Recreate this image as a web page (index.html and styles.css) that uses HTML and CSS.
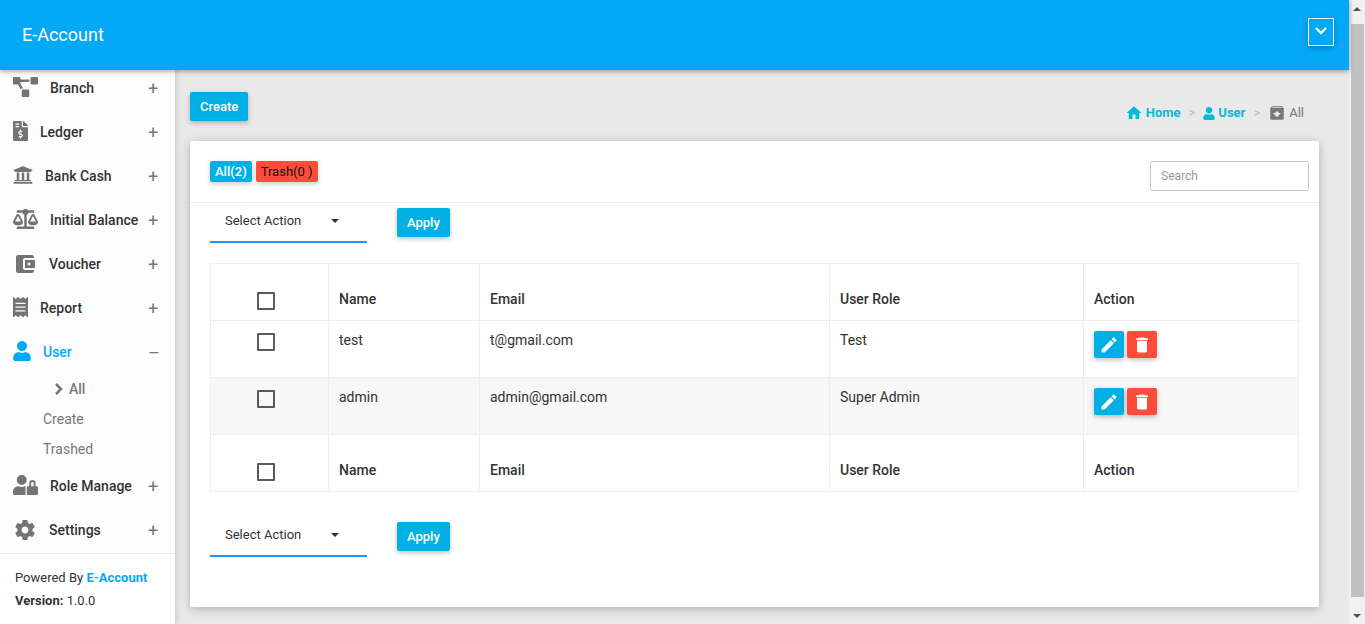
FILE: index.html
```
<!DOCTYPE html>
<html lang="en">
<head>
  <meta charset="UTF-8" />
  <meta name="viewport" content="width=device-width, initial-scale=1.0"/>
  <title>All User | E-Account</title>

  <link rel="stylesheet" href="styles.css">
</head>
<body>
  <div class="page">
    <header class="navbar">
      <a class="brand" href="#">E-Account</a>
      <button type="button" class="nav-toggle" aria-label="Open menu">
        <svg width="14" height="14" viewBox="0 0 14 14"><path d="M2 4l5 5 5-5" fill="none" stroke="currentColor" stroke-width="2.4"/></svg>
      </button>
    </header>

    <div class="wrapper">
      <!-- Left Sidebar -->
      <aside class="sidebar">
        <nav class="menu">
          <a class="menu-item" href="#">
            <svg width="25" height="20" viewBox="0 0 640 512"><path d="M384 320H256c-17.67 0-32 14.33-32 32v128c0 17.67 14.33 32 32 32h128c17.67 0 32-14.33 32-32V352c0-17.67-14.33-32-32-32zM192 32c0-17.67-14.33-32-32-32H32C14.33 0 0 14.33 0 32v128c0 17.67 14.33 32 32 32h95.72l73.16 128.04C211.98 300.98 232.4 288 256 288h.28L192 175.51V128h224V64H192V32zM608 0H480c-17.67 0-32 14.33-32 32v128c0 17.67 14.33 32 32 32h128c17.67 0 32-14.33 32-32V32c0-17.67-14.33-32-32-32z"/></svg>
            <span>Branch</span>
          </a>
          <a class="menu-item" href="#">
            <svg width="15" height="20" viewBox="0 0 384 512"><path d="M377 105L279.1 7c-4.5-4.5-10.6-7-17-7H256v128h128v-6.1c0-6.3-2.5-12.4-7-16.9zm-153 31V0H24C10.7 0 0 10.7 0 24v464c0 13.3 10.7 24 24 24h336c13.3 0 24-10.7 24-24V160H248c-13.2 0-24-10.8-24-24zM64 72c0-4.42 3.58-8 8-8h80c4.42 0 8 3.58 8 8v16c0 4.42-3.58 8-8 8H72c-4.42 0-8-3.58-8-8V72zm0 80v-16c0-4.42 3.58-8 8-8h80c4.42 0 8 3.58 8 8v16c0 4.42-3.58 8-8 8H72c-4.42 0-8-3.58-8-8zm144 263.88V440c0 4.42-3.58 8-8 8h-16c-4.42 0-8-3.58-8-8v-24.29c-11.29-.58-22.27-4.52-31.37-11.35-3.9-2.93-4.1-8.77-.57-12.14l11.75-11.21c2.77-2.64 6.89-2.76 10.13-.73 3.87 2.42 8.26 3.72 12.82 3.72h28.11c6.5 0 11.8-5.92 11.8-13.19 0-5.95-3.61-11.19-8.77-12.73l-45-13.5c-18.59-5.58-31.58-23.42-31.58-43.39 0-24.52 19.05-44.44 42.67-45.07V232c0-4.42 3.58-8 8-8h16c4.42 0 8 3.58 8 8v24.29c11.29.58 22.27 4.51 31.37 11.35 3.9 2.93 4.1 8.77.57 12.14l-11.75 11.21c-2.77 2.64-6.89 2.76-10.13.73-3.87-2.43-8.26-3.72-12.82-3.72h-28.11c-6.5 0-11.8 5.92-11.8 13.19 0 5.95 3.61 11.19 8.77 12.73l45 13.5c18.59 5.58 31.58 23.42 31.58 43.39 0 24.53-19.05 44.44-42.67 45.07z"/></svg>
            <span>Ledger</span>
          </a>
          <a class="menu-item" href="#">
            <svg width="20" height="20" viewBox="0 0 512 512"><path d="M496 128v16a8 8 0 0 1-8 8h-24v12c0 6.627-5.373 12-12 12H60c-6.627 0-12-5.373-12-12v-12H24a8 8 0 0 1-8-8v-16a8 8 0 0 1 4.941-7.392l232-88a7.996 7.996 0 0 1 6.118 0l232 88A8 8 0 0 1 496 128zm-24 304H40c-13.255 0-24 10.745-24 24v16a8 8 0 0 0 8 8h464a8 8 0 0 0 8-8v-16c0-13.255-10.745-24-24-24zM96 192v192H60c-6.627 0-12 5.373-12 12v20h416v-20c0-6.627-5.373-12-12-12h-36V192h-64v192h-64V192h-64v192h-64V192H96z"/></svg>
            <span>Bank Cash</span>
          </a>
          <a class="menu-item" href="#">
            <svg width="25" height="20" viewBox="0 0 640 512"><path d="M256 336h-.02c0-16.18 1.34-8.73-85.05-181.51-17.65-35.29-68.19-35.36-85.87 0C-2.06 328.75.02 320.33.02 336H0c0 44.18 57.31 80 128 80s128-35.82 128-80zM128 176l72 144H56l72-144zm511.98 160c0-16.18 1.34-8.73-85.05-181.51-17.65-35.29-68.19-35.36-85.87 0-87.12 174.26-85.04 165.84-85.04 181.51H384c0 44.18 57.31 80 128 80s128-35.82 128-80h-.02zM440 320l72-144 72 144H440zm88 128H352V153.25c23.51-10.29 41.16-31.48 46.39-57.25H528c8.84 0 16-7.16 16-16V48c0-8.84-7.16-16-16-16H383.64C369.04 12.68 346.09 0 320 0s-49.04 12.68-63.64 32H112c-8.84 0-16 7.16-16 16v32c0 8.84 7.16 16 16 16h129.61c5.23 25.76 22.87 46.96 46.39 57.25V448H112c-8.84 0-16 7.16-16 16v32c0 8.84 7.16 16 16 16h416c8.84 0 16-7.16 16-16v-32c0-8.84-7.16-16-16-16z"/></svg>
            <span>Initial Balance</span>
          </a>
          <a class="menu-item material" href="#">
            <svg width="24" height="24" viewBox="0 0 24 24"><path d="M21 18v1c0 1.1-.9 2-2 2H5c-1.11 0-2-.9-2-2V5c0-1.1.89-2 2-2h14c1.1 0 2 .9 2 2v1h-9c-1.11 0-2 .9-2 2v8c0 1.1.89 2 2 2h9zm-9-2h10V8H12v8zm4-2.5c-.83 0-1.5-.67-1.5-1.5s.67-1.5 1.5-1.5 1.5.67 1.5 1.5-.67 1.5-1.5 1.5z"/></svg>
            <span>Voucher</span>
          </a>
          <a class="menu-item" href="#">
            <svg width="15" height="20" viewBox="0 0 384 512"><path d="M358.4 3.2L320 48 265.6 3.2a15.9 15.9 0 0 0-19.2 0L192 48 137.6 3.2a15.9 15.9 0 0 0-19.2 0L64 48 25.6 3.2C15-4.7 0 2.8 0 16v480c0 13.2 15 20.7 25.6 12.8L64 464l54.4 44.8a15.9 15.9 0 0 0 19.2 0L192 464l54.4 44.8a15.9 15.9 0 0 0 19.2 0L320 464l38.4 44.8c10.5 7.9 25.6.4 25.6-12.8V16c0-13.2-15-20.7-25.6-12.8zM320 360c0 4.4-3.6 8-8 8H72c-4.4 0-8-3.6-8-8v-16c0-4.4 3.6-8 8-8h240c4.4 0 8 3.6 8 8v16zm0-96c0 4.4-3.6 8-8 8H72c-4.4 0-8-3.6-8-8v-16c0-4.4 3.6-8 8-8h240c4.4 0 8 3.6 8 8v16zm0-96c0 4.4-3.6 8-8 8H72c-4.4 0-8-3.6-8-8v-16c0-4.4 3.6-8 8-8h240c4.4 0 8 3.6 8 8v16z"/></svg>
            <span>Report</span>
          </a>
          <a class="menu-item active" href="#">
            <svg width="18" height="20" viewBox="0 0 448 512"><path d="M224 256c70.7 0 128-57.3 128-128S294.7 0 224 0 96 57.3 96 128s57.3 128 128 128zm89.6 32h-16.7c-22.2 10.2-46.9 16-72.9 16s-50.6-5.8-72.9-16h-16.7C60.2 288 0 348.2 0 422.4V464c0 26.5 21.5 48 48 48h352c26.5 0 48-21.5 48-48v-41.6c0-74.2-60.2-134.4-134.4-134.4z"/></svg>
            <span>User</span>
          </a>
          <div class="submenu">
            <a class="current" href="#">
              <svg width="9" height="12" viewBox="0 0 9 12"><path d="M2 1l5 5-5 5" fill="none" stroke="currentColor" stroke-width="2.6"/></svg>
              All
            </a>
            <a href="#">Create</a>
            <a href="#">Trashed</a>
          </div>
          <a class="menu-item" href="#">
            <svg width="25" height="20" viewBox="0 0 640 512"><path d="M224 256A128 128 0 1 0 96 128a128 128 0 0 0 128 128zm96 64a63.08 63.08 0 0 1 8.1-30.5c-4.8-.5-9.5-1.5-14.5-1.5h-16.7a174.08 174.08 0 0 1-145.8 0h-16.7A134.43 134.43 0 0 0 0 422.4V464a48 48 0 0 0 48 48h280.9a63.54 63.54 0 0 1-8.9-32zm288-32h-32v-80a80 80 0 0 0-160 0v80h-32a32 32 0 0 0-32 32v160a32 32 0 0 0 32 32h224a32 32 0 0 0 32-32V320a32 32 0 0 0-32-32zm-80 0h-64v-80a32 32 0 0 1 64 0z"/></svg>
            <span>Role Manage</span>
          </a>
          <a class="menu-item material" href="#">
            <svg width="24" height="24" viewBox="0 0 24 24"><path d="M19.43 12.98c.04-.32.07-.64.07-.98s-.03-.66-.07-.98l2.11-1.65c.19-.15.24-.42.12-.64l-2-3.46c-.12-.22-.39-.3-.61-.22l-2.49 1c-.52-.4-1.08-.73-1.69-.98l-.38-2.65C14.46 2.18 14.25 2 14 2h-4c-.25 0-.46.18-.49.42l-.38 2.65c-.61.25-1.17.59-1.69.98l-2.49-1c-.23-.09-.49 0-.61.22l-2 3.46c-.13.22-.07.49.12.64l2.11 1.65c-.04.32-.07.65-.07.98s.03.66.07.98l-2.11 1.65c-.19.15-.24.42-.12.64l2 3.46c.12.22.39.3.61.22l2.49-1c.52.4 1.08.73 1.69.98l.38 2.65c.03.24.24.42.49.42h4c.25 0 .46-.18.49-.42l.38-2.65c.61-.25 1.17-.59 1.69-.98l2.49 1c.23.09.49 0 .61-.22l2-3.46c.12-.22.07-.49-.12-.64l-2.11-1.65zM12 15.5c-1.93 0-3.5-1.57-3.5-3.5s1.57-3.5 3.5-3.5 3.5 1.57 3.5 3.5-1.57 3.5-3.5 3.5z"/></svg>
            <span>Settings</span>
          </a>
        </nav>
        <div class="legal">
          <div>Powered By <a href="#">E-Account</a></div>
          <div><b>Version:</b> 1.0.0</div>
        </div>
      </aside>

      <main class="content">
        <div class="top-row">
          <button type="button" class="btn">Create</button>
          <nav class="breadcrumb">
            <a class="home" href="#">
              <svg width="18" height="18" viewBox="0 0 24 24"><path d="M10 20v-6h4v6h5v-8h3L12 3 2 12h3v8z"/></svg>
              Home
            </a>
            <span class="sep">&gt;</span>
            <a href="#">
              <svg width="12" height="13" viewBox="0 0 448 512"><path d="M224 256c70.7 0 128-57.3 128-128S294.7 0 224 0 96 57.3 96 128s57.3 128 128 128zm89.6 32h-16.7c-22.2 10.2-46.9 16-72.9 16s-50.6-5.8-72.9-16h-16.7C60.2 288 0 348.2 0 422.4V464c0 26.5 21.5 48 48 48h352c26.5 0 48-21.5 48-48v-41.6c0-74.2-60.2-134.4-134.4-134.4z"/></svg>
              User
            </a>
            <span class="sep">&gt;</span>
            <span class="here">
              <svg width="18" height="18" viewBox="0 0 24 24"><path d="M20.54 5.23l-1.39-1.68C18.88 3.21 18.47 3 18 3H6c-.47 0-.88.21-1.16.55L3.46 5.23C3.17 5.57 3 6.02 3 6.5V19c0 1.1.9 2 2 2h14c1.1 0 2-.9 2-2V6.5c0-.48-.17-.93-.46-1.27zM12 17.5L6.5 12H10v-2h4v2h3.5L12 17.5zM5.12 5l.81-1h12l.94 1H5.12z"/></svg>
              All
            </span>
          </nav>
        </div>

        <section class="card">
          <div class="card-header">
            <div class="filters">
              <a class="tag" href="#">All(2)</a>
              <a class="tag trash" href="#">Trash(0 )</a>
            </div>
            <input type="text" class="search" placeholder="Search" aria-label="Search" />
          </div>

          <form class="card-body">
            <div class="bulk">
              <div class="select">
                <select aria-label="Select action">
                  <option>Select Action</option>
                  <option>Trash</option>
                </select>
              </div>
              <button type="button" class="btn">Apply</button>
            </div>

            <table>
              <colgroup>
                <col class="col-check"><col class="col-name"><col class="col-email"><col class="col-role"><col class="col-action">
              </colgroup>
              <thead>
                <tr>
                  <th class="check"><input type="checkbox" aria-label="Select all" /></th>
                  <th>Name</th>
                  <th>Email</th>
                  <th>User Role</th>
                  <th>Action</th>
                </tr>
              </thead>
              <tbody>
                <tr>
                  <td class="check"><input type="checkbox" aria-label="Select test" /></td>
                  <td>test</td>
                  <td>t@gmail.com</td>
                  <td>Test</td>
                  <td>
                    <div class="actions">
                      <button type="button" class="icon-btn" aria-label="Edit"><svg width="20" height="20" viewBox="0 0 24 24"><path d="M3 17.25V21h3.75L17.81 9.94l-3.75-3.75L3 17.25zM20.71 7.04c.39-.39.39-1.02 0-1.41l-2.34-2.34c-.39-.39-1.02-.39-1.41 0l-1.83 1.83 3.75 3.75 1.83-1.83z"/></svg></button>
                      <button type="button" class="icon-btn delete" aria-label="Delete"><svg width="20" height="20" viewBox="0 0 24 24"><path d="M6 19c0 1.1.9 2 2 2h8c1.1 0 2-.9 2-2V7H6v12zM19 4h-3.5l-1-1h-5l-1 1H5v2h14V4z"/></svg></button>
                    </div>
                  </td>
                </tr>
                <tr>
                  <td class="check"><input type="checkbox" aria-label="Select admin" /></td>
                  <td>admin</td>
                  <td>admin@gmail.com</td>
                  <td>Super Admin</td>
                  <td>
                    <div class="actions">
                      <button type="button" class="icon-btn" aria-label="Edit"><svg width="20" height="20" viewBox="0 0 24 24"><path d="M3 17.25V21h3.75L17.81 9.94l-3.75-3.75L3 17.25zM20.71 7.04c.39-.39.39-1.02 0-1.41l-2.34-2.34c-.39-.39-1.02-.39-1.41 0l-1.83 1.83 3.75 3.75 1.83-1.83z"/></svg></button>
                      <button type="button" class="icon-btn delete" aria-label="Delete"><svg width="20" height="20" viewBox="0 0 24 24"><path d="M6 19c0 1.1.9 2 2 2h8c1.1 0 2-.9 2-2V7H6v12zM19 4h-3.5l-1-1h-5l-1 1H5v2h14V4z"/></svg></button>
                    </div>
                  </td>
                </tr>
              </tbody>
              <tfoot>
                <tr>
                  <th class="check"><input type="checkbox" aria-label="Select all" /></th>
                  <th>Name</th>
                  <th>Email</th>
                  <th>User Role</th>
                  <th>Action</th>
                </tr>
              </tfoot>
            </table>

            <div class="bulk">
              <div class="select">
                <select aria-label="Select action">
                  <option>Select Action</option>
                  <option>Trash</option>
                </select>
              </div>
              <button type="button" class="btn">Apply</button>
            </div>
          </form>
        </section>
      </main>
    </div>
  </div>

  <div class="scrollbar" aria-hidden="true">
    <svg width="16" height="16" viewBox="0 0 16 16"><path d="M4 11h8L8 7z"/></svg>
    <div class="thumb"></div>
    <svg width="16" height="16" viewBox="0 0 16 16"><path d="M4 6h8l-4 4z"/></svg>
  </div>
</body>
</html>
```
FILE: styles.css
```
* {
  box-sizing: border-box;
}
body {
  margin: 0;
  height: 100vh;
  display: flex;
  overflow: hidden;
  background-color: #e9e9e9;
  color: #333;
  font-family: Roboto, Arial, sans-serif;
  font-size: 14px;
  line-height: 20px;
}
a {
  text-decoration: none;
}
svg {
  fill: currentColor;
  flex: none;
}
button, input, select {
  font-family: inherit;
}
.page {
  flex: 1;
  min-width: 0;
  display: flex;
  flex-direction: column;
}

/* Navbar */
.navbar {
  position: relative;
  z-index: 2;
  flex: none;
  height: 70px;
  padding: 0 15px 0 22px;
  display: flex;
  align-items: center;
  justify-content: space-between;
  background-color: #03a9f7;
  box-shadow: 0 1px 5px rgba(0,0,0,0.4);
}
.brand {
  color: #fff;
  font-size: 18px;
}
.nav-toggle {
  width: 26px;
  height: 28px;
  margin-bottom: 6px;
  padding: 0 0 2px;
  display: flex;
  align-items: center;
  justify-content: center;
  border: 1px solid #fff;
  background: none;
  color: #fff;
  box-shadow: 0 2px 6px rgba(0,0,0,0.25);
}
.wrapper {
  flex: 1;
  min-height: 0;
  display: flex;
}

/* Sidebar */
.sidebar {
  width: 175px;
  flex: none;
  display: flex;
  flex-direction: column;
  background-color: #fdfdfd;
  box-shadow: 2px 0 5px rgba(0,0,0,0.12);
}
.menu {
  flex: 1;
  min-height: 0;
  padding-bottom: 1px;
  display: flex;
  flex-direction: column;
  justify-content: flex-end;
  overflow: hidden;
}
.menu-item {
  flex: none;
  height: 44px;
  padding: 0 17px 0 13px;
  display: flex;
  align-items: center;
  color: #333;
  font-weight: 500;
  white-space: nowrap;
}
.menu-item svg {
  color: #747474;
  margin: 0 12px 2px 0;
}
.menu-item.material svg {
  margin-bottom: 0;
}
.menu-item::after {
  content: "+";
  width: 10px;
  margin-left: auto;
  padding-top: 2px;
  color: #777;
  font-size: 18px;
  font-weight: 400;
  text-align: center;
}
.menu-item.active,
.menu-item.active svg {
  color: #03a9f7;
}
.menu-item.active::after {
  content: "–";
}
.submenu {
  flex: none;
  display: flex;
  flex-direction: column;
}
.submenu a {
  padding: 5px 0 5px 43px;
  color: #777;
}
.submenu .current {
  padding-left: 54px;
  display: flex;
  align-items: center;
  gap: 6px;
  font-weight: 500;
}
.legal {
  padding: 12px 15px;
  border-top: 1px solid #eee;
  background-color: #fff;
  font-size: 13px;
  line-height: 23px;
}
.legal a {
  color: #03a9f7;
  font-weight: 700;
}

/* Content */
.content {
  flex: 1;
  min-width: 0;
  padding: 22px 30px 0 15px;
}
.top-row {
  display: flex;
  align-items: flex-start;
  justify-content: space-between;
  padding-right: 15px;
  margin-bottom: 18px;
}
.btn {
  height: 29px;
  padding: 0 10px;
  border: none;
  border-radius: 2px;
  background-color: #00b0e4;
  color: #fff;
  font-size: 13px;
  font-weight: 500;
  box-shadow: 0 2px 5px rgba(0,0,0,0.25);
  cursor: pointer;
}
.breadcrumb {
  display: flex;
  align-items: center;
  gap: 8px;
  padding-top: 11px;
  font-size: 13px;
}
.breadcrumb a,
.here {
  display: flex;
  align-items: center;
  gap: 3px;
}
.breadcrumb a {
  color: #00bcd4;
  font-weight: 700;
}
.sep {
  color: #bbb;
}
.here {
  color: #777;
}

.card {
  background-color: #fff;
  border-radius: 2px;
  box-shadow: 0 2px 10px rgba(0,0,0,0.25);
}
.card-header {
  display: flex;
  align-items: flex-start;
  justify-content: space-between;
  padding: 20px 10px 11px 20px;
  border-bottom: 1px solid #eee;
}
.filters {
  display: flex;
  gap: 4px;
}
.tag {
  padding: 0 5px;
  border-radius: 2px;
  background-color: #00b0e4;
  color: #fff;
  font-size: 13px;
  font-weight: 500;
  line-height: 21px;
  box-shadow: 0 2px 5px rgba(0,0,0,0.2);
}
.tag.trash {
  background-color: #ff4b3a;
  color: #111;
  font-weight: 400;
}
.search {
  width: 159px;
  height: 30px;
  padding: 0 10px;
  border: 1px solid #ccc;
  border-radius: 2px;
  font-size: 12px;
}
.search::placeholder {
  color: #999;
}
.card-body {
  padding: 5px 20px 50px;
}
.bulk {
  display: flex;
  align-items: flex-start;
  gap: 30px;
}
.select {
  position: relative;
  width: 157px;
}
.select select {
  display: block;
  width: 100%;
  height: 35px;
  padding: 0 40px 8px 15px;
  appearance: none;
  border: none;
  border-bottom: 2px solid #2196f3;
  border-radius: 0;
  background: none;
  color: #333;
  font-size: 13px;
}
.select::after {
  content: "";
  position: absolute;
  top: 11px;
  right: 28px;
  border: 4px solid transparent;
  border-top-color: #333;
  border-bottom: none;
  pointer-events: none;
}

table {
  width: 100%;
  margin: 20px 0 30px;
  table-layout: fixed;
  border-collapse: collapse;
  line-height: 18px;
}
.col-check { width: 118px; }
.col-name { width: 151px; }
.col-email { width: 350px; }
.col-role { width: 254px; }
.col-action { width: 215px; }
tr {
  height: 57px;
}
th, td {
  padding: 10px;
  border: 1px solid #eee;
  text-align: left;
  vertical-align: top;
}
th {
  padding-bottom: 12px;
  font-weight: 500;
  vertical-align: bottom;
}
tbody tr:nth-child(even) {
  background-color: #f7f7f7;
}
.check {
  padding-bottom: 10px;
  text-align: center;
}
.check input {
  appearance: none;
  width: 18px;
  height: 18px;
  margin: 2px 7px 0 0;
  border: 2px solid #5a5a5a;
  border-radius: 1px;
  vertical-align: top;
}
.actions {
  display: flex;
  gap: 3px;
}
.icon-btn {
  width: 30px;
  height: 27px;
  padding: 1px 0 0;
  display: flex;
  align-items: center;
  justify-content: center;
  border: none;
  border-radius: 2px;
  background-color: #00b0e4;
  color: #fff;
  box-shadow: 0 2px 5px rgba(0,0,0,0.25);
  cursor: pointer;
}
.icon-btn.delete {
  background-color: #ff4b3a;
}

/* Scrollbar */
.scrollbar {
  width: 16px;
  flex: none;
  display: flex;
  flex-direction: column;
  gap: 8px;
  background-color: #f1f1f1;
  color: #505050;
}
.thumb {
  flex: 1;
  margin: 0 1px 3px 2px;
  background-color: #c1c1c1;
}
```
